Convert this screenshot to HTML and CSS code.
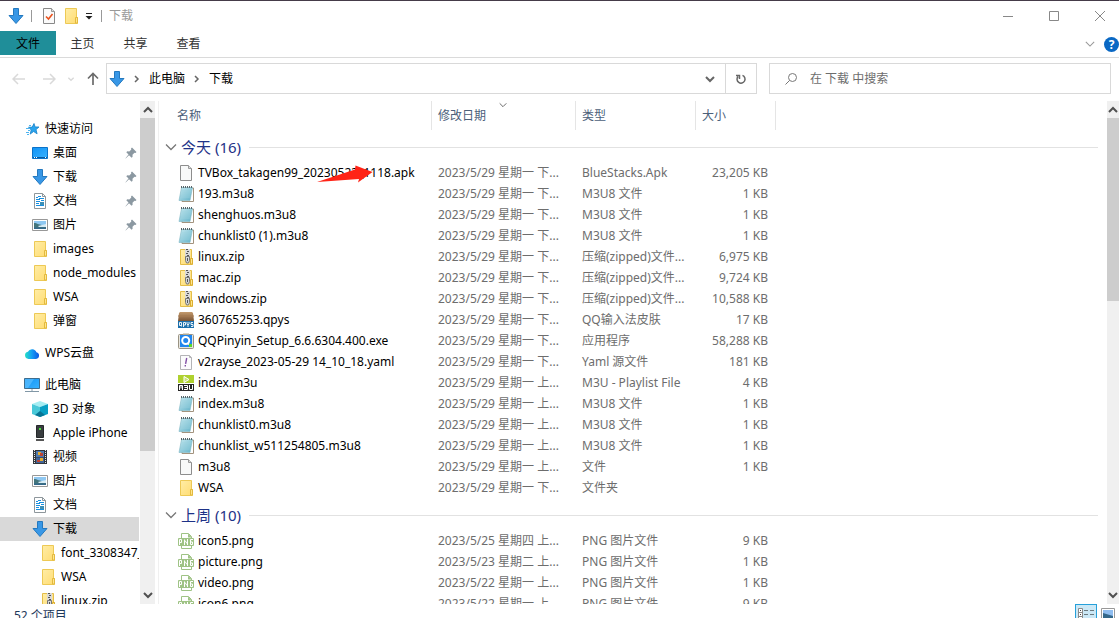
FILE: index.html
```html
<!DOCTYPE html>
<html lang="zh-CN">
<head>
<meta charset="utf-8">
<title>下载</title>
<link rel="stylesheet" href="styles.css">
</head>
<body>
<svg class="defs" aria-hidden="true">
  <defs>
    <linearGradient id="gFolder" x1="0" y1="0" x2="1" y2="1"><stop offset="0" stop-color="#ffeda6"/><stop offset="1" stop-color="#ffdc72"/></linearGradient>
    <linearGradient id="gNote" x1="0" y1="0" x2="1" y2="1"><stop offset="0" stop-color="#c5e8ef"/><stop offset="1" stop-color="#62b2c9"/></linearGradient>
    <linearGradient id="gCloud" x1="0" y1="0" x2="1" y2="0"><stop offset="0" stop-color="#25e0c4"/><stop offset=".5" stop-color="#139cf5"/><stop offset="1" stop-color="#0b57e3"/></linearGradient>
    <linearGradient id="gBlue" x1="0" y1="0" x2="1" y2="1"><stop offset="0" stop-color="#1193f5"/><stop offset="1" stop-color="#38b2ff"/></linearGradient>
    <linearGradient id="gBox" x1="0" y1="0" x2="0" y2="1"><stop offset="0" stop-color="#c39a6d"/><stop offset="1" stop-color="#795334"/></linearGradient>
  </defs>
  <symbol id="down" viewBox="0 0 16 16"><path d="M5.500.5h5v7h4.500L8 15.500 1 7.500h4.500z" fill="#3897e6" stroke="#2479bf"/></symbol>
  <symbol id="folder" viewBox="0 0 16 16"><path d="M2.500.500h11v9h1v6h-12z" fill="url(#gFolder)" stroke="#edc955"/><path d="M12.500 15V9.500h2V15z" fill="#ffe68f" stroke="#e3b93e"/></symbol>
  <symbol id="zip" viewBox="0 0 16 16"><path d="M2.500.500h11v9h1v6h-12z" fill="url(#gFolder)" stroke="#e3bd49"/><path d="M12.500 15V9.500h2V15z" fill="#ffe68f" stroke="#dcae31"/><path d="M7 0h5v9H7z" fill="#d9d9d9"/><path d="M8 .500h2M9 2.500h2M8 4.500h2M9 6.500h2" stroke="#555"/><path d="M7.500 7.500h4v4l-1 2.500h-2l-1-2.500z" fill="#d5d8da" stroke="#777"/><path d="M9.500 9v3" stroke="#555"/></symbol>
  <symbol id="file" viewBox="0 0 16 16"><path d="M2.500.500h8l3 3v12h-11z" fill="#f8f9f9" stroke="#8d8d8d"/><path d="M10.500.500v3h3" fill="#ddd" stroke="#999"/></symbol>
  <symbol id="note" viewBox="0 0 16 16"><path d="M4 2h11.500v13.500H4z" fill="#fff" stroke="#a2937e"/><path d="M3.500 1.500h11L12 14.500H1z" fill="url(#gNote)" stroke="#80b7c4" stroke-width=".6"/><path d="M4 5h9M3.600 7h9M3.200 9h9M2.800 11h9" stroke="#9fd3df" stroke-width=".6"/><path d="M3.500 0v2M5.500 0v2M7.500 0v2M9.500 0v2M11.500 0v2M13.500 0v2" stroke="#57666b"/></symbol>
  <symbol id="qpys" viewBox="0 0 16 16"><path d="M1 1l1-1h12l1 1 1 8H0z" fill="url(#gBox)"/><path d="M0 4h16" stroke="#a67b50"/><path d="M0 9h16v7H0z" fill="#1b6fac"/><path d="M1.500 10.500h2v3h-2zM3.500 13.500v1M5.500 15v-4.500h2v2.500h-2M9 10v2l1 1 1-1v-2M10 13v2M15 10.500h-2v2h2v2h-2" fill="none" stroke="#fff" stroke-width=".9"/></symbol>
  <symbol id="exe" viewBox="0 0 16 16"><rect x=".5" y="1.500" width="15" height="14" rx="1" fill="#e6e5df" stroke="#9a9382"/><path d="M5 .500h6v2H5z" fill="#b2a993"/><rect x="2" y="2" width="12" height="12" fill="#2186ef"/><circle cx="7.700" cy="7.500" r="3.500" fill="none" stroke="#fff" stroke-width="2"/><path d="M9 10l3 2" stroke="#fff" stroke-width="1.500"/><path d="M11 11h3v3h-3z" fill="#55d929"/></symbol>
  <symbol id="yaml" viewBox="0 0 16 16"><path d="M2.500 1.500h9l2 2v12h-11z" fill="#fcfcfd" stroke="#b4b4b7"/><path d="M11.500 1.500v2h2" fill="none" stroke="#b4b4b7"/><path d="M8.700 4L7.600 9.800M7.300 11v1.500" stroke="#8250a5" stroke-width="1.400"/></symbol>
  <symbol id="m3u" viewBox="0 0 16 16"><path d="M0 0h16v8H0z" fill="#afd12f"/><path d="M6 1.500l5 3-5 3z" fill="#c9e37b" stroke="#fff"/><path d="M0 9h16v7H0z" fill="#252525"/><path d="M1.500 15v-4.500h3V15M3 10.500v3M6 10.500h3.500v4H6M6.500 12.500h3M11.500 10v4.500h3V10" fill="none" stroke="#fff"/></symbol>
  <symbol id="png" viewBox="0 0 16 16"><path d="M3.500 5V.500h7l3 3V5M3.500 13v2.500h10V13" fill="#fff" stroke="#9fc385"/><path d="M10 .500v4h4" fill="#9fc385"/><rect x="0" y="5" width="16" height="8" rx="1" fill="#9fc385"/><path d="M1.500 12V6.500h2v3h-2M6.500 12V6.500M7 7.500l2 3M9.500 12V6M15 6.500h-2.500v5h2V9H13" fill="none" stroke="#fff"/></symbol>
  <symbol id="star" viewBox="0 0 16 16"><path d="M10 2.500l1.100 3.400 3.900.1-3 2.600 1.100 4.200-3.500-2.300-3.400 2.600 1-4.200L4.500 6.300l3.700-.2z" fill="#2aa4ed" stroke="#1580c8" stroke-width=".8"/><path d="M5 4.500h2M2 7.500h4M4 9.500h2M2 11.500h3M3 13.500h2" stroke="#4fb4ef"/></symbol>
  <symbol id="desktop" viewBox="0 0 16 16"><path d="M.5 2.500h15v11H.5z" fill="url(#gBlue)" stroke="#0b72c9"/><path d="M1 12.500h14" stroke="#08599d"/><path d="M2 12.500h1M4 12.500h1M13 12.500h1" stroke="#fff"/></symbol>
  <symbol id="doc" viewBox="0 0 16 16"><path d="M2.500.500h8l3 3v12h-11z" fill="#fff" stroke="#8e979c"/><path d="M10.500.500v3h3" fill="none" stroke="#8e979c"/><path d="M6 3.500h3M4 4.500h2M7 5.500h5M4 6.500h4M9 7.500h3M4 8.500h4M4 10.500h3M4 12.500h8" stroke="#188fe0"/><path d="M8 9h4v3H8z" fill="#3d8fb5"/></symbol>
  <symbol id="pic" viewBox="0 0 16 16"><path d="M.5 2.500h15v11H.5z" fill="#fff" stroke="#989898"/><path d="M2 4h12v8H2z" fill="#8fc8f2"/><path d="M2 6c3 0 5 2 12 3v3H2z" fill="#43757c"/><path d="M6 9l8-2v3H7z" fill="#d7ebf5"/><path d="M2 10.500h12V12H2z" fill="#34688b"/></symbol>
  <symbol id="cloud" viewBox="0 0 16 16"><path d="M4.500 14a3.700 3.700 0 0 1-.6-7.300 4.600 4.600 0 0 1 8.500.6A3.400 3.400 0 0 1 12 14z" fill="url(#gCloud)"/></symbol>
  <symbol id="pc" viewBox="0 0 16 16"><path d="M.5 1.500h15v10H.5z" fill="url(#gBlue)" stroke="#3e6d8e"/><path d="M1 2h9L4 11H1z" fill="#68c4ff" opacity=".6"/><path d="M7 12h2v2H7z" fill="#c3ced6"/><path d="M1 14.500h14" stroke="#8197a6"/></symbol>
  <symbol id="cube" viewBox="0 0 16 16"><path d="M0 3l8-3 8 3-8 3z" fill="#a5edf2"/><path d="M0 3l8 3v10l-8-3z" fill="#48c8d8"/><path d="M16 3L8 6v10l8-3z" fill="#079fc4"/><path d="M8 10l-5 4 5 2 5-2z" fill="#087494"/></symbol>
  <symbol id="phone" viewBox="0 0 16 16"><path d="M4.500.500h7v12h-7z" fill="#393d40" stroke="#25282a"/><path d="M4 14h8v2H4z" fill="#555"/><path d="M7 3h2v2H7z" fill="#4be13c"/></symbol>
  <symbol id="video" viewBox="0 0 16 16"><path d="M1 1h14v14H1z" fill="#32373c"/><path d="M4 2h8v6H4z" fill="#4e79b0"/><path d="M4 8.500h8V14H4z" fill="#41659a"/><path d="M6 3h3v3H6zM8 9h3v3H8z" fill="#e7ad2d"/><path d="M8 4h3v3H8zM5 11h3v2H5z" fill="#bd4433"/><path d="M2.500 1v14M13.500 1v14" stroke="#e5e5e5" stroke-dasharray="1 1"/></symbol>
  <symbol id="pin" viewBox="0 0 12 12"><path d="M7 .500L11.500 5l-1 1-1-.2-2 2 .1 2-1 1L4 8.300.700 11.500.500 11.300 3.500 7.500 1.300 5.300l1-1 2 .1 2-2L6 1.500z" fill="#8b98a1"/></symbol>
  <symbol id="chev" viewBox="0 0 12 12"><path d="M1 3.500l5 5 5-5" fill="none" stroke="currentColor" stroke-width="1.300"/></symbol>
  <symbol id="bold" viewBox="0 0 12 12"><path d="M2 4l4 4 4-4" fill="none" stroke="currentColor" stroke-width="2"/></symbol>
</svg>

<header class="titlebar">
  <svg class="ic"><use href="#down"/></svg>
  <span class="bar"></span>
  <button class="plain qa" aria-label="属性"><svg class="ic" viewBox="0 0 16 16"><path d="M2.500.500h8l3 3v12h-11z" fill="#fafafa" stroke="#888"/><path d="M10.500.500v3h3" fill="#ddd" stroke="#999"/><path d="M5 8.500l2.500 2.500 4-5" fill="none" stroke="#e8511c" stroke-width="1.600"/></svg></button>
  <button class="plain qa" aria-label="新建文件夹"><svg class="ic"><use href="#folder"/></svg></button>
  <button class="plain" aria-label="自定义快速访问工具栏"><svg class="more" viewBox="0 0 8 8"><path d="M1 1.500h6" stroke="#222"/><path d="M.5 4h7L4 7.500z" fill="#222"/></svg></button>
  <span class="bar wide"></span>
  <span class="title">下载</span>
  <div class="winbtns">
    <button class="plain" aria-label="最小化"><svg viewBox="0 0 12 12"><path d="M1 6.500h10" stroke="#888"/></svg></button>
    <button class="plain" aria-label="最大化"><svg viewBox="0 0 12 12"><path d="M1.500 1.500h9v9h-9z" fill="none" stroke="#888"/></svg></button>
    <button class="plain" aria-label="关闭"><svg viewBox="0 0 12 12"><path d="M1 1l10 10M11 1L1 11" stroke="#888"/></svg></button>
  </div>
</header>

<nav class="ribbon">
  <button class="plain tab active">文件</button>
  <button class="plain tab">主页</button>
  <button class="plain tab">共享</button>
  <button class="plain tab">查看</button>
  <div class="help">
    <button class="plain" aria-label="展开功能区"><svg class="c10"><use href="#chev"/></svg></button>
    <button class="plain q" aria-label="帮助">?</button>
  </div>
</nav>

<div class="address">
  <div class="arrows">
    <button class="plain" aria-label="后退"><svg viewBox="0 0 14 14"><path d="M1 7h12M6 2L1 7l5 5" fill="none" stroke="#d9d9d9" stroke-width="1.500"/></svg></button>
    <button class="plain" aria-label="前进"><svg viewBox="0 0 14 14"><path d="M1 7h12M8 2l5 5-5 5" fill="none" stroke="#d9d9d9" stroke-width="1.500"/></svg></button>
    <button class="plain small" aria-label="最近"><svg viewBox="0 0 12 12"><path d="M2 4l4 4 4-4" fill="none" stroke="#d9d9d9" stroke-width="2"/></svg></button>
    <button class="plain" aria-label="向上"><svg viewBox="0 0 14 14"><path d="M7 1.500V13M2 6.500l5-5 5 5" fill="none" stroke="#6b6b6b" stroke-width="1.700"/></svg></button>
  </div>
  <div class="crumbs">
    <svg class="ic"><use href="#down"/></svg>
    <svg class="sep" viewBox="0 0 6 8"><path d="M1 1l3 3-3 3" fill="none" stroke="#666" stroke-width="1.500"/></svg>
    <a href="#pc">此电脑</a>
    <svg class="sep" viewBox="0 0 6 8"><path d="M1 1l3 3-3 3" fill="none" stroke="#666" stroke-width="1.500"/></svg>
    <a href="#down">下载</a>
    <button class="plain drop" aria-label="历史"><svg class="c12"><use href="#bold"/></svg></button>
    <button class="plain refresh" aria-label="刷新"><svg viewBox="0 0 12 12"><path d="M7.500 2.400A4 4 0 1 1 3 3.500M1 2.500h3.500V6" fill="none" stroke="#666" stroke-width="1.500"/></svg></button>
  </div>
  <label class="search">
    <svg viewBox="0 0 14 14"><circle cx="8.500" cy="5.500" r="4" fill="none" stroke="#777"/><path d="M5.500 8.500L1.500 12.500" stroke="#777"/></svg>
    <input type="text" aria-label="搜索" placeholder="在 下载 中搜索">
  </label>
</div>

<main class="main">
  <aside class="side">
    <ul class="tree">
      <li class="l0"><svg class="ic"><use href="#star"/></svg><span>快速访问</span></li>
      <li class="l1"><svg class="ic"><use href="#desktop"/></svg><span>桌面</span><svg class="pin"><use href="#pin"/></svg></li>
      <li class="l1"><svg class="ic"><use href="#down"/></svg><span>下载</span><svg class="pin"><use href="#pin"/></svg></li>
      <li class="l1"><svg class="ic"><use href="#doc"/></svg><span>文档</span><svg class="pin"><use href="#pin"/></svg></li>
      <li class="l1"><svg class="ic"><use href="#pic"/></svg><span>图片</span><svg class="pin"><use href="#pin"/></svg></li>
      <li class="l1"><svg class="ic"><use href="#folder"/></svg><span>images</span></li>
      <li class="l1"><svg class="ic"><use href="#folder"/></svg><span>node_modules</span></li>
      <li class="l1"><svg class="ic"><use href="#folder"/></svg><span>WSA</span></li>
      <li class="l1"><svg class="ic"><use href="#folder"/></svg><span>弹窗</span></li>
      <li class="l0 top"><svg class="ic"><use href="#cloud"/></svg><span>WPS云盘</span></li>
      <li class="l0 top"><svg class="ic"><use href="#pc"/></svg><span>此电脑</span></li>
      <li class="l1"><svg class="ic"><use href="#cube"/></svg><span>3D 对象</span></li>
      <li class="l1"><svg class="ic"><use href="#phone"/></svg><span>Apple iPhone</span></li>
      <li class="l1"><svg class="ic"><use href="#video"/></svg><span>视频</span></li>
      <li class="l1"><svg class="ic"><use href="#pic"/></svg><span>图片</span></li>
      <li class="l1"><svg class="ic"><use href="#doc"/></svg><span>文档</span></li>
      <li class="l1 selected"><svg class="ic"><use href="#down"/></svg><span>下载</span></li>
      <li class="l2"><svg class="ic"><use href="#folder"/></svg><span>font_3308347_</span></li>
      <li class="l2"><svg class="ic"><use href="#folder"/></svg><span>WSA</span></li>
      <li class="l2"><svg class="ic"><use href="#zip"/></svg><span>linux.zip</span></li>
    </ul>
    <div class="scroll">
      <svg class="c12 flip"><use href="#bold"/></svg>
      <div class="track"><div class="thumb long"></div></div>
      <svg class="c12"><use href="#bold"/></svg>
    </div>
  </aside>

  <section class="content">
    <div class="list">
      <table class="files">
        <colgroup><col class="cname"><col class="cdate"><col class="ctype"><col class="csize"><col></colgroup>
        <thead>
          <tr><th>名称</th><th>修改日期<svg class="sort"><use href="#chev"/></svg></th><th>类型</th><th>大小</th><th></th></tr>
        </thead>
        <tbody>
          <tr><th colspan="5" class="group"><button class="plain"><svg class="c12"><use href="#chev"/></svg>今天 (16)</button></th></tr>
          <tr><td><div class="name"><svg class="ic"><use href="#file"/></svg>TVBox_takagen99_20230523_1118.apk<svg class="mark" viewBox="0 0 56 18"><path d="M0 17L38 4.500 38.500.500 55.500 7 41 17.500 42 14z" fill="#ff2316"/></svg></div></td><td>2023/5/29 星期一 下...</td><td>BlueStacks.Apk</td><td>23,205 KB</td><td></td></tr>
          <tr><td><div class="name"><svg class="ic"><use href="#note"/></svg>193.m3u8</div></td><td>2023/5/29 星期一 下...</td><td>M3U8 文件</td><td>1 KB</td><td></td></tr>
          <tr><td><div class="name"><svg class="ic"><use href="#note"/></svg>shenghuos.m3u8</div></td><td>2023/5/29 星期一 下...</td><td>M3U8 文件</td><td>1 KB</td><td></td></tr>
          <tr><td><div class="name"><svg class="ic"><use href="#note"/></svg>chunklist0 (1).m3u8</div></td><td>2023/5/29 星期一 下...</td><td>M3U8 文件</td><td>1 KB</td><td></td></tr>
          <tr><td><div class="name"><svg class="ic"><use href="#zip"/></svg>linux.zip</div></td><td>2023/5/29 星期一 下...</td><td>压缩(zipped)文件...</td><td>6,975 KB</td><td></td></tr>
          <tr><td><div class="name"><svg class="ic"><use href="#zip"/></svg>mac.zip</div></td><td>2023/5/29 星期一 下...</td><td>压缩(zipped)文件...</td><td>9,724 KB</td><td></td></tr>
          <tr><td><div class="name"><svg class="ic"><use href="#zip"/></svg>windows.zip</div></td><td>2023/5/29 星期一 下...</td><td>压缩(zipped)文件...</td><td>10,588 KB</td><td></td></tr>
          <tr><td><div class="name"><svg class="ic"><use href="#qpys"/></svg>360765253.qpys</div></td><td>2023/5/29 星期一 下...</td><td>QQ输入法皮肤</td><td>17 KB</td><td></td></tr>
          <tr><td><div class="name"><svg class="ic"><use href="#exe"/></svg>QQPinyin_Setup_6.6.6304.400.exe</div></td><td>2023/5/29 星期一 下...</td><td>应用程序</td><td>58,288 KB</td><td></td></tr>
          <tr><td><div class="name"><svg class="ic"><use href="#yaml"/></svg>v2rayse_2023-05-29 14_10_18.yaml</div></td><td>2023/5/29 星期一 下...</td><td>Yaml 源文件</td><td>181 KB</td><td></td></tr>
          <tr><td><div class="name"><svg class="ic"><use href="#m3u"/></svg>index.m3u</div></td><td>2023/5/29 星期一 上...</td><td>M3U - Playlist File</td><td>4 KB</td><td></td></tr>
          <tr><td><div class="name"><svg class="ic"><use href="#note"/></svg>index.m3u8</div></td><td>2023/5/29 星期一 上...</td><td>M3U8 文件</td><td>1 KB</td><td></td></tr>
          <tr><td><div class="name"><svg class="ic"><use href="#note"/></svg>chunklist0.m3u8</div></td><td>2023/5/29 星期一 上...</td><td>M3U8 文件</td><td>1 KB</td><td></td></tr>
          <tr><td><div class="name"><svg class="ic"><use href="#note"/></svg>chunklist_w511254805.m3u8</div></td><td>2023/5/29 星期一 上...</td><td>M3U8 文件</td><td>1 KB</td><td></td></tr>
          <tr><td><div class="name"><svg class="ic"><use href="#file"/></svg>m3u8</div></td><td>2023/5/29 星期一 上...</td><td>文件</td><td>1 KB</td><td></td></tr>
          <tr><td><div class="name"><svg class="ic"><use href="#folder"/></svg>WSA</div></td><td>2023/5/29 星期一 下...</td><td>文件夹</td><td></td><td></td></tr>
        </tbody>
        <tbody>
          <tr><th colspan="5" class="group"><button class="plain"><svg class="c12"><use href="#chev"/></svg>上周 (10)</button></th></tr>
          <tr><td><div class="name"><svg class="ic"><use href="#png"/></svg>icon5.png</div></td><td>2023/5/25 星期四 上...</td><td>PNG 图片文件</td><td>9 KB</td><td></td></tr>
          <tr><td><div class="name"><svg class="ic"><use href="#png"/></svg>picture.png</div></td><td>2023/5/23 星期二 上...</td><td>PNG 图片文件</td><td>1 KB</td><td></td></tr>
          <tr><td><div class="name"><svg class="ic"><use href="#png"/></svg>video.png</div></td><td>2023/5/22 星期一 上...</td><td>PNG 图片文件</td><td>1 KB</td><td></td></tr>
          <tr><td><div class="name"><svg class="ic"><use href="#png"/></svg>icon6.png</div></td><td>2023/5/22 星期一 上...</td><td>PNG 图片文件</td><td>9 KB</td><td></td></tr>
        </tbody>
      </table>
    </div>
    <div class="scroll edge">
      <svg class="c12 flip"><use href="#bold"/></svg>
      <div class="track"><div class="thumb short"></div></div>
      <svg class="c12"><use href="#bold"/></svg>
    </div>
  </section>
</main>

<footer class="status">
  <span class="count">52 个项目</span>
  <div class="views">
    <button class="plain on" aria-label="详细信息"><svg viewBox="0 0 16 12"><path d="M.5.500h4v11h-4zM.5 4.500h4M.5 8.500h4" fill="#fff" stroke="#8b8b8b"/><path d="M2 2.500h1M2 6.500h1M2 10.500h1" stroke="#444"/><path d="M6 2.500h4M12 2.500h4M6 6.500h4M12 6.500h4M6 10.500h4M12 10.500h4" stroke="#6c7a80"/></svg></button>
    <button class="plain" aria-label="大图标"><svg viewBox="0 0 14 12"><path d="M.5.500h13v11H.5z" fill="#fff" stroke="#989898"/><path d="M2 2h10v8H2z" fill="#8fbdf0"/><path d="M2 5l10 3v2H2z" fill="#34688b"/></svg></button>
  </div>
</footer>
</body>
</html>
```
FILE: styles.css
```css
* { box-sizing: border-box; }

body {
  margin: 0;
  height: 100vh;
  overflow: hidden;
  display: flex;
  flex-direction: column;
  background: #fff;
  border-top: 1px solid #453b49;
  color: #000;
  font: 12px/20px "Noto Sans", "Noto Sans CJK SC", sans-serif;
}

.defs { position: absolute; width: 0; height: 0; }
svg { display: block; flex: none; }
.ic { width: 16px; height: 16px; }
.c10 { width: 10px; height: 10px; }
.c12 { width: 12px; height: 12px; }

.plain {
  margin: 0;
  padding: 0;
  border: 0;
  background: none;
  font: inherit;
  color: inherit;
  display: flex;
  align-items: center;
  justify-content: center;
}

.titlebar { flex: none; height: 30px; padding-left: 8px; display: flex; align-items: center; }
.bar { width: 1px; height: 12px; margin: 0 7px; background: #999; }
.bar.wide { margin-left: 8px; }
.qa { margin-right: 6px; }
.qa:first-of-type { margin-left: 2px; }
.more { width: 8px; height: 8px; }
.title { color: #999; }
.winbtns { margin: 0 -4px 0 auto; display: flex; }
.winbtns .plain { width: 46px; height: 29px; }
.winbtns svg { width: 12px; height: 12px; }

.ribbon { flex: none; height: 27px; display: flex; align-items: flex-start; border-bottom: 1px solid #dadada; color: #333; }
.tab { width: 53px; height: 24px; padding-top: 2px; }
.tab.active { width: 56px; background: #1f8e99; color: #000; }
.help { margin-left: auto; height: 26px; display: flex; align-items: center; gap: 9px; color: #999; }
.q { width: 15px; height: 15px; border-radius: 8px; background: #0a68c4; color: #fff; font-weight: 700; line-height: 15px; }

.address { flex: none; height: 43px; padding: 0 8px 2px 12px; display: flex; align-items: center; gap: 12px; }
.arrows { display: flex; align-items: center; gap: 16px; width: 82px; }
.arrows svg { width: 14px; height: 14px; }
.arrows .small { margin: 0 -5px; }
.arrows .small svg { width: 8px; height: 8px; }
.crumbs { flex: 647 1 0; height: 31px; padding-left: 2px; border: 1px solid #d9d9d9; display: flex; align-items: center; gap: 9px; }
.sep { width: 6px; height: 8px; }
.crumbs a { color: #000; text-decoration: none; }
.drop { margin-left: auto; color: #666; }
.refresh { width: 31px; height: 29px; border-left: 1px solid #d9d9d9; }
.refresh svg { width: 12px; height: 12px; }
.search { flex: 326 1 0; height: 31px; padding-left: 14px; border: 1px solid #d9d9d9; display: flex; align-items: center; gap: 12px; }
.search svg { width: 14px; height: 14px; }
.search input { flex: 1; min-width: 0; border: 0; padding: 0; outline: 0; font: inherit; background: none; }
.search input::placeholder { color: #6d6d6d; opacity: 1; }

.main { flex: 1; min-height: 0; display: flex; }
.side { flex: none; width: 159px; display: flex; overflow: hidden; border-right: 1px solid #f0f0f0; }
.tree { flex: none; width: 139px; margin: 0 1px 0 0; padding: 16px 0 0; list-style: none; overflow: hidden; }
.tree li { height: 24px; display: flex; align-items: center; gap: 5px; white-space: nowrap; overflow: hidden; }
.l0 { padding-left: 24px; }
.l1 { padding-left: 32px; }
.l2 { padding-left: 40px; }
.tree .top { margin-top: 8px; }
.selected { background: #d9d9d9; }
.pin { width: 12px; height: 12px; margin: 0 2px 0 auto; }

.scroll { flex: none; width: 15px; background: #f0f0f0; color: #505050; display: flex; flex-direction: column; align-items: center; padding: 3px 0; gap: 2px; }
.track { flex: 1; align-self: stretch; }
.thumb { background: #cdcdcd; }
.long { height: 71%; }
.short { height: 39%; }
.flip { transform: rotate(180deg); }
.edge { width: 12px; }

.content { flex: 1; min-width: 0; display: flex; }
.list { flex: 1; min-width: 0; overflow: hidden; }
.files { width: 100%; table-layout: fixed; border-collapse: separate; border-spacing: 0; }
.cname { width: 273px; }
.cdate { width: 144px; }
.ctype { width: 120px; }
.csize { width: 80px; }
.files th { font-weight: 400; text-align: left; }
.files thead th { position: relative; height: 29px; padding: 0 6px; border-right: 1px solid #e5e5e5; color: #4c607a; }
.files thead th:first-child { padding-left: 18px; }
.files thead th:last-child { border-right: 0; }
.sort { position: absolute; top: 0; left: 67px; width: 8px; height: 8px; color: #555; }
.files td { height: 21px; padding: 0 6px; color: #6d6d6d; white-space: nowrap; line-height: 20px; }
.files td:first-child { padding: 0 0 0 19px; color: #000; }
.files td:nth-child(4) { padding: 0 8px 0 0; text-align: right; }
.name { position: relative; display: flex; align-items: center; gap: 4px; }
.mark { position: absolute; left: 139px; top: 2px; width: 56px; height: 18px; }
.files .group { height: 32px; padding: 2px 9px 0 6px; }
.group .plain { width: 100%; gap: 4px; color: #1e3287; font-size: 15px; }
.group .plain::after { content: ""; flex: 1; height: 1px; margin-left: 4px; background: #e2e2e2; }
.group svg { color: #777; }

.status { flex: none; height: 14px; padding: 0 4px 0 14px; overflow: hidden; display: flex; align-items: flex-start; color: #1e395b; }
.count { padding-top: 2px; }
.views { margin-left: auto; display: flex; gap: 4px; }
.views .plain { height: 20px; }
.views .on { width: 22px; border: 1px solid #26a0da; background: #cbe8f6; }
.views .on svg { width: 16px; height: 12px; }
.views svg { width: 14px; height: 12px; }
```
